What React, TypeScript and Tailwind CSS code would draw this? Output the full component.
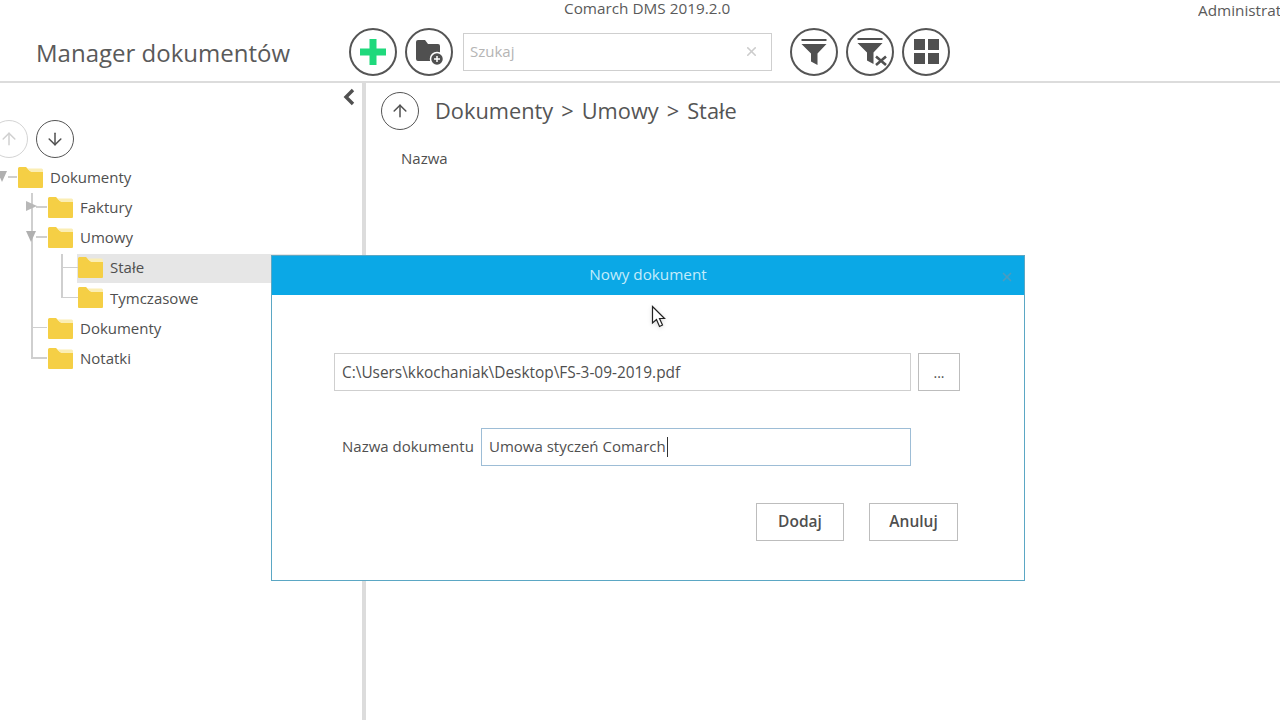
import { ArrowDown, ArrowUp, X } from "lucide-react"
import type { ReactNode } from "react"

function RoundButton({ children, size = "big", faded = false }: { children: ReactNode; size?: "big" | "small"; faded?: boolean }) {
  return (
    <div
      className={`flex shrink-0 items-center justify-center rounded-full bg-white ${
        size === "big" ? "h-[48px] w-[48px] border-2" : "h-[38px] w-[38px] border-[1.5px]"
      } ${faded ? "border-[#d4d4d4] text-[#d0d0d0]" : "border-[#555555] text-[#505050]"}`}
    >
      {children}
    </div>
  )
}

function Folder() {
  return (
    <svg width="25" height="21" viewBox="0 0 25 21" className="shrink-0">
      <path d="M0 1.5 Q0 0 1.5 0 H8 L12 4 H25 V20 Q25 21 24 21 H1 Q0 21 0 20 Z" fill="#f5cf45" />
      <path d="M9 1.5 H23.5 Q25 1.5 25 3 V5 H13 Z" fill="#fbeeb4" />
    </svg>
  )
}

function Funnel() {
  return (
    <>
      <path d="M0.5 2 H25.5" stroke="#505050" strokeWidth="2" />
      <path d="M0.5 6 H25.5 L16.5 15.5 V27 L10 23.5 V15.5 Z" fill="#505050" />
    </>
  )
}

type Node = {
  label: string
  left: number
  arrow?: "open" | "closed"
  selected?: boolean
  line: ReactNode
}

const tree: Node[] = [
  {
    label: "Dokumenty",
    left: 18,
    arrow: "open",
    line: <div className="absolute left-[8px] top-[14px] h-[1.5px] w-[9px] bg-[#cfcfcf]" />,
  },
  {
    label: "Faktury",
    left: 48,
    arrow: "closed",
    line: <div className="absolute left-[36px] top-[14px] h-[1.5px] w-[11px] bg-[#cfcfcf]" />,
  },
  {
    label: "Umowy",
    left: 48,
    arrow: "open",
    line: <div className="absolute left-[36px] top-[14px] h-[1.5px] w-[11px] bg-[#cfcfcf]" />,
  },
  {
    label: "Stałe",
    left: 78,
    selected: true,
    line: <div className="absolute left-[61px] top-[14px] h-[1.5px] w-[17px] bg-[#cfcfcf]" />,
  },
  {
    label: "Tymczasowe",
    left: 78,
    line: <div className="absolute left-[61px] top-[14px] h-[1.5px] w-[17px] bg-[#cfcfcf]" />,
  },
  {
    label: "Dokumenty",
    left: 48,
    line: <div className="absolute left-[31px] top-[14px] h-[1.5px] w-[16px] bg-[#cfcfcf]" />,
  },
  {
    label: "Notatki",
    left: 48,
    line: <div className="absolute left-[31px] top-[14px] h-[1.5px] w-[16px] bg-[#cfcfcf]" />,
  },
]

function TreeRow({ node }: { node: Node }) {
  return (
    <div className="relative flex h-[30.2px] items-center">
      {node.selected && <div className="absolute left-[77px] top-[1px] h-[29px] w-[263px] bg-[#e6e6e6]" />}
      {node.line}
      {node.arrow === "open" && (
        <div
          className={`absolute top-[9px] h-0 w-0 border-x-[5.5px] border-t-[11px] border-x-transparent border-t-[#b0b0b0] ${
            node.left === 18 ? "left-[-3px]" : "left-[26px]"
          }`}
        />
      )}
      {node.arrow === "closed" && (
        <div className="absolute left-[26px] top-[9px] h-0 w-0 border-y-[5.5px] border-l-[11px] border-y-transparent border-l-[#b8b8b8]" />
      )}
      <div className="relative flex items-center gap-[7px]" style={{ marginLeft: node.left }}>
        <Folder />
        <span className="text-[15px] text-[#4f4f4f]">{node.label}</span>
      </div>
    </div>
  )
}

export default function App() {
  return (
    <div className="relative h-[720px] w-[1280px] overflow-hidden bg-white font-['Open_Sans','Noto_Sans',sans-serif] text-[#4f4f4f]">
      {/* naglowek */}
      <header className="h-[83px] border-b-2 border-[#dcdcdc]">
        <div className="flex h-[22px] items-start whitespace-nowrap text-[15.3px] leading-[17px] text-[#5a5a5a]">
          <span className="ml-[564px]">Comarch DMS 2019.2.0</span>
          <span className="ml-auto w-[82px] translate-y-[2px] overflow-hidden">Administrator</span>
        </div>
        <div className="flex h-[59px] items-center">
          <h1 className="ml-[36px] w-[313px] pt-[3px] text-[24px] font-normal text-[#5a5a5a]">Manager dokumentów</h1>
          <div className="flex gap-[8px]">
            <RoundButton>
              <svg width="28" height="28" viewBox="0 0 28 28">
                <path d="M14 1 V27 M1 14 H27" stroke="#1fd97c" strokeWidth="7" />
              </svg>
            </RoundButton>
            <RoundButton>
              <svg width="30" height="28" viewBox="0 0 30 28">
                <path d="M2 4 Q2 2 4 2 H11 L14 6 H24 Q26 6 26 8 V23 H4 Q2 23 2 21 Z" fill="#505050" />
                <circle cx="23" cy="21" r="6.5" fill="#505050" stroke="#fff" strokeWidth="1.5" />
                <path d="M23 18 V24 M20 21 H26" stroke="#fff" strokeWidth="1.5" />
              </svg>
            </RoundButton>
          </div>
          <div className="ml-[10px] flex h-[38px] w-[309px] items-center justify-between border border-[#cfcfcf] pl-[6px] pr-[12px]">
            <span className="text-[15px] text-[#b5b5b5]">Szukaj</span>
            <X size={15} strokeWidth={2.5} className="text-[#cccccc]" />
          </div>
          <div className="ml-[18px] flex gap-[8px]">
            <RoundButton>
              <svg width="26" height="28" viewBox="0 0 26 28">
                <Funnel />
              </svg>
            </RoundButton>
            <RoundButton>
              <svg width="34" height="30" viewBox="-4 0 34 30">
                <Funnel />
                <path d="M19 19.5 L29 28 M29 19.5 L19 28" stroke="#fff" strokeWidth="5" />
                <path d="M19 19.5 L29 28 M29 19.5 L19 28" stroke="#505050" strokeWidth="2.6" />
              </svg>
            </RoundButton>
            <RoundButton>
              <div className="grid grid-cols-2 gap-[3px]">
                <div className="h-[11px] w-[11px] bg-[#505050]" />
                <div className="h-[11px] w-[11px] bg-[#505050]" />
                <div className="h-[11px] w-[11px] bg-[#505050]" />
                <div className="h-[11px] w-[11px] bg-[#505050]" />
              </div>
            </RoundButton>
          </div>
        </div>
      </header>

      <div className="flex h-[637px]">
        {/* drzewo */}
        <aside className="w-[362px] shrink-0">
          <div className="flex h-[28px] items-center justify-end pr-[7px]">
            <svg width="12" height="18" viewBox="0 0 12 18">
              <path d="M10 2 L3 9 L10 16" fill="none" stroke="#505050" strokeWidth="3.4" />
            </svg>
          </div>
          <div className="-ml-[10px] mt-[9px] flex gap-[8px]">
            <RoundButton size="small" faded>
              <ArrowUp size={20} strokeWidth={1.8} />
            </RoundButton>
            <RoundButton size="small">
              <ArrowDown size={20} strokeWidth={1.8} />
            </RoundButton>
          </div>
          <div className="relative mt-[4px]">
            <div className="absolute left-[31px] top-[31px] h-[165px] w-[1.5px] bg-[#cfcfcf]" />
            <div className="absolute left-[61px] top-[92px] h-[44px] w-[1.5px] bg-[#cfcfcf]" />
            {tree.map((node, i) => (
              <TreeRow key={i} node={node} />
            ))}
          </div>
        </aside>
        <div className="w-[4px] shrink-0 bg-[#dcdcdc]" />

        {/* lista dokumentow */}
        <main className="flex-1 pl-[15px] pt-[9px]">
          <div className="flex items-center gap-[16px]">
            <RoundButton size="small">
              <ArrowUp size={20} strokeWidth={1.8} />
            </RoundButton>
            <div className="flex gap-[8px] pt-px text-[21.8px] text-[#555555]">
              <span>Dokumenty</span>
              <span>&gt;</span>
              <span>Umowy</span>
              <span>&gt;</span>
              <span>Stałe</span>
            </div>
          </div>
          <div className="ml-[20px] mt-[17px] text-[15px]">Nazwa</div>
        </main>
      </div>

      {/* okno dialogowe */}
      <div className="absolute left-[271px] top-[255px] flex h-[326px] w-[754px] flex-col border border-[#5ba7c4] bg-white">
        <div className="relative flex h-[39px] shrink-0 items-center justify-center bg-[#0ba8e6] pb-[2px] text-[15.25px] text-[#c4ecfb]">
          Nowy dokument
          <X size={14} strokeWidth={3} className="absolute right-[10px] top-[14px] text-[#4a9cc0]" />
        </div>
        <div className="flex flex-col pl-[62px] pt-[58px]">
          <div className="flex gap-[7px]">
            <div className="flex h-[38px] w-[577px] items-center border border-[#cfcfcf] px-[7px] pt-px text-[15.4px]">
              C:\Users\kkochaniak\Desktop\FS-3-09-2019.pdf
            </div>
            <div className="flex h-[38px] w-[42px] items-center justify-center border border-[#bdbdbd] text-[14px]">...</div>
          </div>
          <div className="mt-[37px] flex items-center">
            <span className="ml-[8px] w-[139px] pb-[2px] text-[15px]">Nazwa dokumentu</span>
            <div className="flex h-[38px] w-[430px] items-center border border-[#9dbdd6] px-[7px] pb-px text-[15px]">
              Umowa styczeń Comarch
              <span className="ml-px h-[20px] w-px bg-[#333]" />
            </div>
          </div>
          <div className="ml-[422px] mt-[37px] flex gap-[25px]">
            <div className="flex h-[38px] w-[88px] items-center justify-center border border-[#bdbdbd] text-[15.5px] font-semibold">Dodaj</div>
            <div className="flex h-[38px] w-[89px] items-center justify-center border border-[#bdbdbd] text-[15.5px] font-semibold">Anuluj</div>
          </div>
        </div>
      </div>

      {/* kursor */}
      <svg width="16" height="24" viewBox="0 0 16 24" className="absolute left-[651px] top-[305px] drop-shadow-sm">
        <path d="M1.5 1.5 V18 L5.5 14.5 L8.5 21.5 L11.5 20 L8.5 13.5 H13.5 Z" fill="#fff" stroke="#222" strokeWidth="1.2" />
      </svg>
    </div>
  )
}
